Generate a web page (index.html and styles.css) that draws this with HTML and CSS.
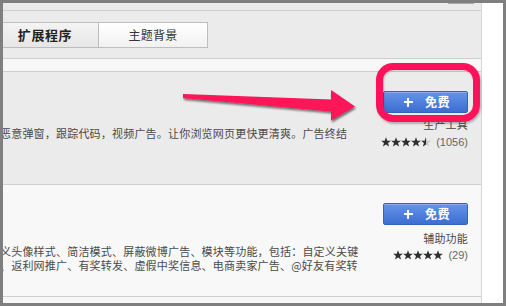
FILE: index.html
```html
<!DOCTYPE html>
<html lang="zh-CN">
<head>
<meta charset="utf-8">
<title>扩展程序</title>
<link rel="stylesheet" href="styles.css">
</head>
<body>
<div class="frame">
  <div class="page">
    <div class="topbar"><div class="scroll-nub"></div></div>
    <div class="tabs">
      <div class="tab tab-active">扩展程序</div>
      <div class="tab">主题背景</div>
    </div>
    <div class="strip"></div>

    <div class="item item-hl">
      <div class="desc desc-one">
        <div class="line">恶意弹窗，跟踪代码，视频广告。让你浏览网页更快更清爽。广告终结</div>
      </div>
      <div class="aside">
        <div class="btn"><span class="plus"></span><span class="btn-text">免费</span></div>
        <div class="cat">生产工具</div>
        <div class="rating">
          <span class="stars">
            <svg class="star" viewBox="0 0 10 10"><path d="M5 0.3 6.3 3.7 9.9 3.7 7 5.9 8.1 9.6 5 7.4 1.9 9.6 3 5.9 0.1 3.7 3.7 3.7Z"/></svg><svg class="star" viewBox="0 0 10 10"><path d="M5 0.3 6.3 3.7 9.9 3.7 7 5.9 8.1 9.6 5 7.4 1.9 9.6 3 5.9 0.1 3.7 3.7 3.7Z"/></svg><svg class="star" viewBox="0 0 10 10"><path d="M5 0.3 6.3 3.7 9.9 3.7 7 5.9 8.1 9.6 5 7.4 1.9 9.6 3 5.9 0.1 3.7 3.7 3.7Z"/></svg><svg class="star" viewBox="0 0 10 10"><path d="M5 0.3 6.3 3.7 9.9 3.7 7 5.9 8.1 9.6 5 7.4 1.9 9.6 3 5.9 0.1 3.7 3.7 3.7Z"/></svg><svg class="star" viewBox="0 0 10 10"><path class="star-off" d="M5 0.3 6.3 3.7 9.9 3.7 7 5.9 8.1 9.6 5 7.4 1.9 9.6 3 5.9 0.1 3.7 3.7 3.7Z"/><path d="M5 0.3 5 7.4 1.9 9.6 3 5.9 0.1 3.7 3.7 3.7Z"/></svg>
          </span>
          <span class="count">(1056)</span>
        </div>
      </div>
    </div>

    <div class="item item-2">
      <div class="desc desc-two">
        <div class="line">义头像样式、简洁模式、屏蔽微博广告、模块等功能，包括：自定义关键</div>
        <div class="line">、返利网推广、有奖转发、虚假中奖信息、电商卖家广告、@好友有奖转</div>
      </div>
      <div class="aside">
        <div class="btn"><span class="plus"></span><span class="btn-text">免费</span></div>
        <div class="cat">辅助功能</div>
        <div class="rating">
          <span class="stars">
            <svg class="star" viewBox="0 0 10 10"><path d="M5 0.3 6.3 3.7 9.9 3.7 7 5.9 8.1 9.6 5 7.4 1.9 9.6 3 5.9 0.1 3.7 3.7 3.7Z"/></svg><svg class="star" viewBox="0 0 10 10"><path d="M5 0.3 6.3 3.7 9.9 3.7 7 5.9 8.1 9.6 5 7.4 1.9 9.6 3 5.9 0.1 3.7 3.7 3.7Z"/></svg><svg class="star" viewBox="0 0 10 10"><path d="M5 0.3 6.3 3.7 9.9 3.7 7 5.9 8.1 9.6 5 7.4 1.9 9.6 3 5.9 0.1 3.7 3.7 3.7Z"/></svg><svg class="star" viewBox="0 0 10 10"><path d="M5 0.3 6.3 3.7 9.9 3.7 7 5.9 8.1 9.6 5 7.4 1.9 9.6 3 5.9 0.1 3.7 3.7 3.7Z"/></svg><svg class="star" viewBox="0 0 10 10"><path d="M5 0.3 6.3 3.7 9.9 3.7 7 5.9 8.1 9.6 5 7.4 1.9 9.6 3 5.9 0.1 3.7 3.7 3.7Z"/></svg>
          </span>
          <span class="count">(29)</span>
        </div>
      </div>
    </div>

    <div class="foot"></div>
  </div>
  <div class="side"></div>

  <svg class="arrow" viewBox="0 0 506 306" width="506" height="306">
    <defs>
      <filter id="sh" x="-10%" y="-50%" width="120%" height="200%">
        <feDropShadow dx="1" dy="2" stdDeviation="1" flood-color="#000" flood-opacity="0.55"/>
      </filter>
    </defs>
    <polygon filter="url(#sh)" fill="#ff1259" points="183,94 331,99.5 331,90 355,106.5 331,120.5 331,111.5 183,98"/>
  </svg>
  <div class="ring"></div>
</div>
</body>
</html>
```
FILE: styles.css
```css
html, body {
  margin: 0;
  padding: 0;
}
body {
  background: #7f7f7f;
  width: 506px;
  height: 306px;
  overflow: hidden;
  font-family: "Liberation Sans", "Noto Sans CJK SC", sans-serif;
}
.frame {
  position: relative;
  margin: 3px 3px 0 3px;
  height: 300px;
  display: flex;
  background: #fff;
}
.page {
  width: 478px;
  flex: none;
  border-right: 1px solid #d6d6d6;
  background: #ebebeb;
  overflow: hidden;
  display: flex;
  flex-direction: column;
}
.side {
  flex: 1;
  background: #fff;
}
.topbar {
  height: 7px;
  border-bottom: 1px solid #cdcdcd;
}
.scroll-nub {
  margin-left: 445px;
  width: 26px;
  height: 1px;
  background: #a9a9a9;
}
.tabs {
  display: flex;
  padding: 11px 0 10px 0;
  margin-left: -12px;
}
.tab {
  height: 24px;
  box-sizing: content-box;
  width: 108px;
  border: 1px solid #bdbdbd;
  background: linear-gradient(#ffffff, #f1f1f1);
  font: 12px/24px "Noto Sans CJK SC", sans-serif;
  color: #333;
  text-align: center;
  letter-spacing: 0.3px;
}
.tab-active {
  width: 106px;
  border-right: none;
  background: linear-gradient(#f4f4f4, #e6e6e6);
  font-weight: bold;
  font-size: 13px;
  color: #222;
  letter-spacing: 0.6px;
}
.strip {
  height: 12px;
  border-top: 1px solid #cdcdcd;
  border-bottom: 1px solid #cdcdcd;
  background: #f7f7f7;
}
.item {
  display: flex;
  border-bottom: 1px solid #d0d0d0;
}
.item-hl {
  height: 112px;
  background: #ebebeb;
}
.item-2 {
  height: 111px;
  background: #f8f8f8;
}
.desc {
  flex: 1;
  margin-left: -3px;
  font: 11px/14px "Noto Sans CJK SC", sans-serif;
  letter-spacing: 0.2px;
  color: #4a4a4a;
  white-space: nowrap;
}
.desc-one {
  padding-top: 54px;
}
.desc-two {
  padding-top: 59px;
}
.aside {
  width: 85px;
  margin-right: 13px;
  display: flex;
  flex-direction: column;
  align-items: flex-end;
}
.item-hl .aside {
  padding-top: 19px;
}
.item-2 .aside {
  padding-top: 18px;
}
.btn {
  box-sizing: border-box;
  width: 85px;
  height: 22px;
  border: 1px solid #3862b8;
  border-radius: 2px;
  background: linear-gradient(#6494e8, #3d6ed0);
  box-shadow: inset 0 1px 0 rgba(255,255,255,0.25);
  display: flex;
  align-items: center;
  justify-content: center;
  gap: 12px;
  padding-left: 3px;
}
.plus {
  width: 9px;
  height: 9px;
  background:
    linear-gradient(#fff, #fff) center / 9px 2px no-repeat,
    linear-gradient(#fff, #fff) center / 2px 9px no-repeat;
}
.btn-text {
  color: #fff;
  font: bold 12px/20px "Noto Sans CJK SC", sans-serif;
  letter-spacing: 0.5px;
}
.cat {
  margin-top: 6px;
  font: 11px/14px "Noto Sans CJK SC", sans-serif;
  letter-spacing: 0.2px;
  color: #4a4a4a;
}
.item-hl .cat {
  margin-top: 4px;
}
.rating {
  margin-top: 1px;
  height: 18px;
  display: flex;
  align-items: center;
  gap: 5px;
}
.item-hl .rating {
  margin-top: 2px;
}
.stars {
  display: flex;
}
.star {
  width: 10px;
  height: 10px;
  fill: #2e2e2e;
}
.star .star-off {
  fill: #c8c8c8;
}
.count {
  font: 11px/18px "Liberation Sans", sans-serif;
  color: #666;
}
.foot {
  flex: 1;
  background: #f7f7f7;
}
.arrow {
  position: absolute;
  left: -3px;
  top: -3px;
  pointer-events: none;
}
.ring {
  position: absolute;
  left: 373px;
  top: 60px;
  width: 104px;
  height: 59px;
  box-sizing: border-box;
  border: 7px solid #ff1259;
  border-radius: 17px;
  box-shadow: 1px 2px 2px rgba(0,0,0,0.25), inset 1px 1px 2px rgba(0,0,0,0.2);
}
```
